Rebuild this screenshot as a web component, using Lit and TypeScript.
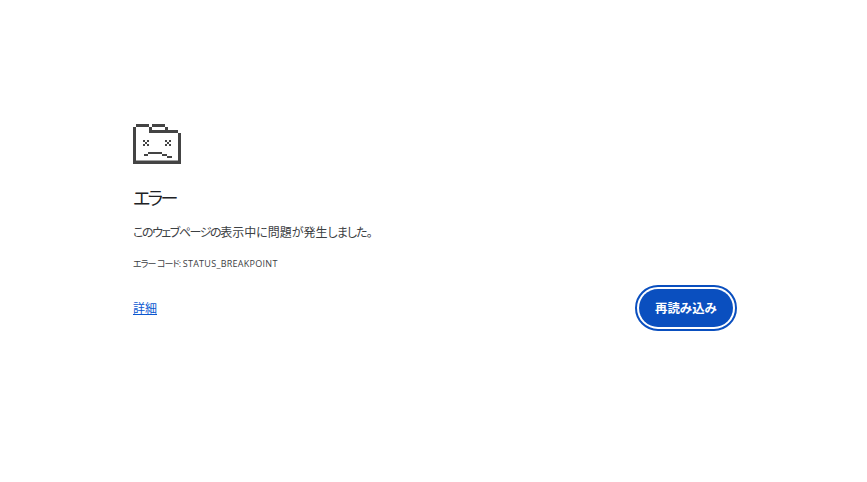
import { LitElement, html, css, svg } from "lit";
import { customElement } from "lit/decorators.js";

const R: [number, number, number, number][] = [
  [3, 0, 13, 3], [19, 0, 13, 3], [0, 3, 3, 37], [16, 3, 3, 6], [32, 3, 3, 3],
  [19, 6, 26, 3], [45, 9, 3, 31], [3, 36.5, 42, 3.5],
  // eyes
  [10, 16, 2, 2], [14, 16, 2, 2], [12, 18, 2, 2], [10, 20, 2, 2], [14, 20, 2, 2],
  [32, 16, 2, 2], [36, 16, 2, 2], [34, 18, 2, 2], [32, 20, 2, 2], [36, 20, 2, 2],
  // mouth
  [11, 30, 4, 2], [15, 28, 14, 2], [29, 30, 5, 2], [34, 32, 5, 2],
];

@customElement("app-root")
export class AppRoot extends LitElement {
  static styles = css`
    :host {
      display: block;
      height: 482px;
      background: #fff;
      font-family: "Open Sans", "Noto Sans CJK JP", sans-serif;
      font-feature-settings: "palt";
      color: #202124;
      overflow: hidden;
    }
    .wrap { box-sizing: border-box; width: 603px; margin-left: 133px; padding-top: 124px; }
    .icon { display: block; width: 48px; height: 40px; }
    h1 { margin: 23px 0 0; font-weight: 400; font-size: 18px; line-height: 22px; letter-spacing: -2.6px; color: #202124; }
    .msg { margin: 15px 0 0; font-size: 12px; line-height: 18px; color: #3c4043; }
    .k1 { letter-spacing: -1.45px; }
    .k2 { letter-spacing: -0.9px; }
    .code { margin: 15px 0 0; font-size: 9px; line-height: 14px; color: #3c4043; }
    .cj { letter-spacing: -0.9px; }
    .cl { letter-spacing: 0.28px; }
    .row { display: flex; justify-content: space-between; align-items: center; margin-top: 15px; }
    a { font-size: 12px; color: #0b57d0; text-decoration: underline; }
    button {
      box-sizing: border-box; width: 94px; height: 38px; margin: 3px; padding: 0;
      border: none; border-radius: 19px; background: #0a4fbf; color: #fff;
      outline: 2px solid #0a4fbf; outline-offset: 2px;
      font: 700 12.4px "Open Sans", "Noto Sans CJK JP", sans-serif;
    }
  `;
  render() {
    return html`<main class="wrap">
      <svg class="icon" viewBox="0 0 48 40" fill="#444">
        ${R.map(([x, y, w, h]) => svg`<rect x=${x} y=${y} width=${w} height=${h}></rect>`)}
      </svg>
      <h1>エラー</h1>
      <p class="msg"><span class="k1">このウェブページの</span>表示中に問題が発生<span class="k2">しました。</span></p>
      <p class="code"><span class="cj">エラー コード:</span> <span class="cl">STATUS_BREAKPOINT</span></p>
      <div class="row"><a href="#">詳細</a><button>再読み込み</button></div>
    </main>`;
  }
}
